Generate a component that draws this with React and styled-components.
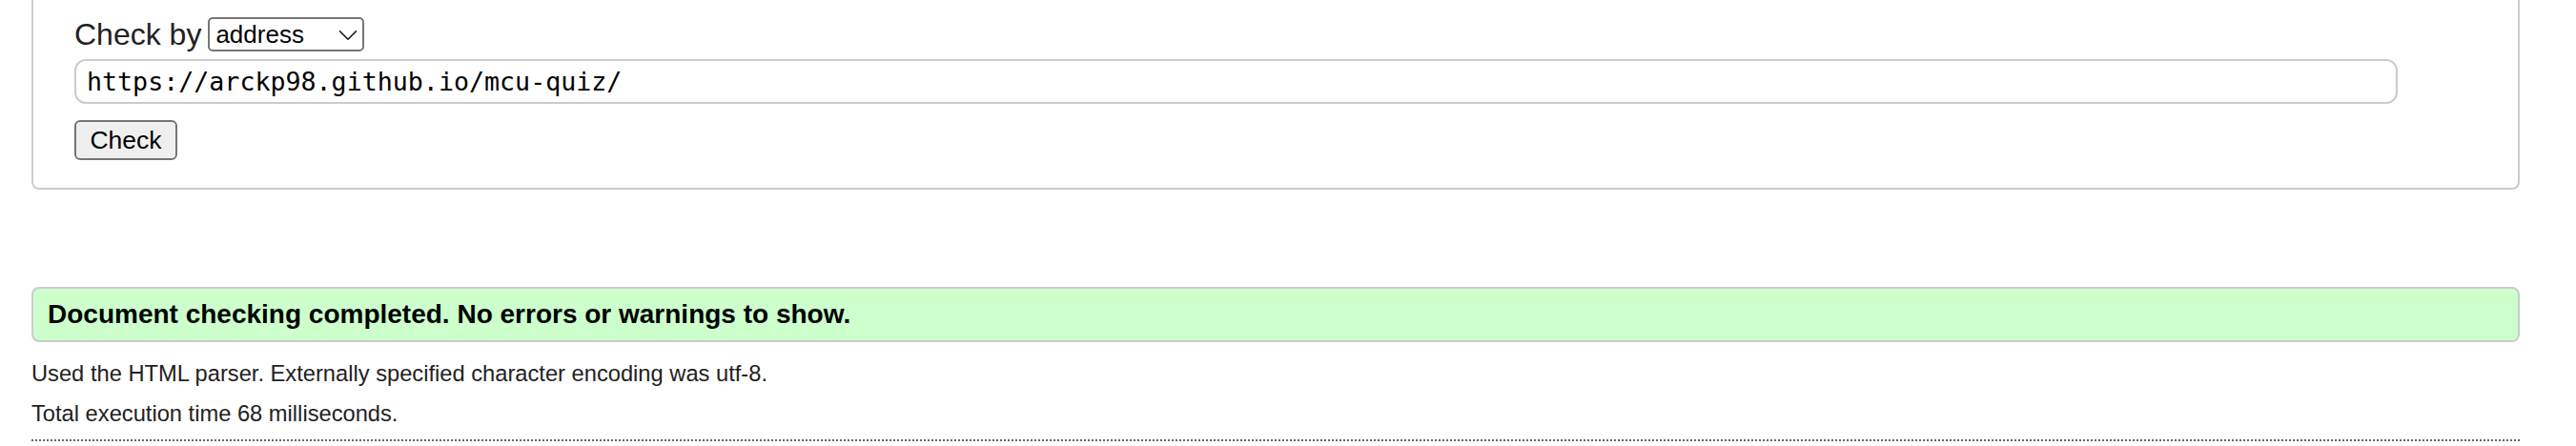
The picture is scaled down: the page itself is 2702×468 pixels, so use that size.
import styled, { createGlobalStyle } from 'styled-components';
import { ChevronDown } from 'lucide-react';

const GlobalStyle = createGlobalStyle`
  html, body {
    margin: 0;
    padding: 0;
    background: #ffffff;
  }
  body {
    font-family: "Liberation Sans", Arial, sans-serif;
    color: #222222;
  }
`;

export default function App() {
  return (
    <>
      <GlobalStyle />
      <Page>
        <CheckForm onSubmit={(e) => e.preventDefault()}>
          <CheckByRow>
            <span>Check by</span>
            <SelectWrap>
              <ModeSelect defaultValue={'address'}>
                <option value={'address'}>address</option>
                <option value={'upload'}>file upload</option>
                <option value={'input'}>text input</option>
              </ModeSelect>
              <Chevron size={34} strokeWidth={1.1} />
            </SelectWrap>
          </CheckByRow>
          <UrlInput type={'url'} defaultValue={'https://arckp98.github.io/mcu-quiz/'} />
          <SubmitRow>
            <CheckButton type={'submit'}>Check</CheckButton>
          </SubmitRow>
        </CheckForm>

        <SuccessBox>Document checking completed. No errors or warnings to show.</SuccessBox>
        <Details>
          <p>Used the HTML parser. Externally specified character encoding was utf-8.</p>
          <p>Total execution time 68 milliseconds.</p>
        </Details>
        <Separator />
      </Page>
    </>
  );
}

const Page = styled.div`
  padding: 0 59px 0 33px;
`;

const CheckForm = styled.form`
  display: flex;
  flex-direction: column;
  border: 2px solid #cccccc;
  border-top: none;
  border-radius: 0 0 8px 8px;
  padding: 18px 126px 29px 43px;
`;

const CheckByRow = styled.div`
  display: flex;
  align-items: center;
  gap: 7px;
  height: 36px;
  font-size: 32px;
  color: #222222;
`;

const SelectWrap = styled.span`
  position: relative;
  display: inline-flex;
`;

const ModeSelect = styled.select`
  appearance: none;
  width: 164px;
  height: 36px;
  font-family: "Liberation Sans", Arial, sans-serif;
  font-size: 26px;
  color: #000000;
  background: #ffffff;
  border: 2px solid #767676;
  border-radius: 5px;
  padding: 0 4px 0 6px;
`;

const Chevron = styled(ChevronDown)`
  position: absolute;
  right: 0;
  top: 2px;
  color: #111111;
  pointer-events: none;
`;

const UrlInput = styled.input`
  margin-top: 8px;
  height: 47px;
  box-sizing: border-box;
  border: 2px solid #cccccc;
  border-radius: 12px;
  padding: 0 11px;
  font-family: "DejaVu Sans Mono", "Liberation Mono", monospace;
  font-size: 26.65px;
  color: #000000;
  outline: none;
`;

const SubmitRow = styled.div`
  display: flex;
  margin-top: 17px;
`;

const CheckButton = styled.button`
  height: 42px;
  width: 108px;
  box-sizing: border-box;
  font-family: "Liberation Sans", Arial, sans-serif;
  font-size: 26.5px;
  color: #000000;
  background: #efefef;
  border: 2px solid #767676;
  border-radius: 6px;
  padding: 0;
`;

const SuccessBox = styled.div`
  margin-top: 102px;
  height: 58px;
  box-sizing: border-box;
  display: flex;
  align-items: center;
  padding: 0 15px;
  background: #ccffcc;
  border: 2px solid #cccccc;
  border-radius: 8px;
  font-weight: bold;
  font-size: 28px;
  color: #000000;
`;

const Details = styled.div`
  padding-top: 12px;
  font-size: 23.7px;
  color: #222222;

  & p {
    margin: 0;
    line-height: 42px;
  }
`;

const Separator = styled.hr`
  margin: 6px 0 0;
  border: none;
  border-top: 2px dotted #666666;
`;
